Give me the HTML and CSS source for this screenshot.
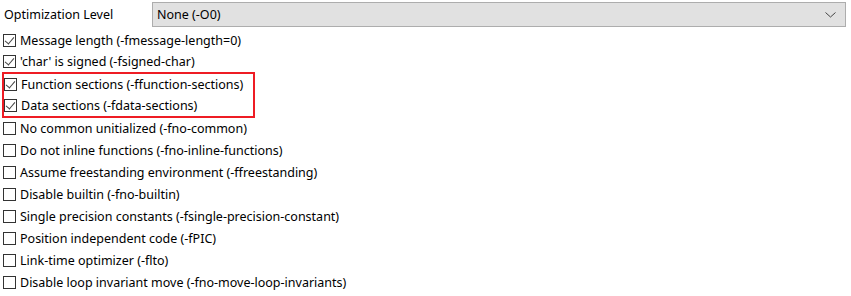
FILE: index.html
```html
<!DOCTYPE html>
<html lang="en">
<head>
    <meta charset="UTF-8">
    <title>Optimization</title>
    <link rel="stylesheet" href="styles.css">
</head>
<body>
    <div class="panel">
        <!-- Уровень оптимизации -->
        <div class="level-row">
            <label class="level-label">Optimization Level</label>
            <div class="combo">
                <span class="combo-text">None (-O0)</span>
                <svg class="combo-arrow" width="11" height="6" viewBox="0 0 11 6">
                    <path d="M0.5 0.5 L5.5 5 L10.5 0.5" fill="none" stroke="#444" stroke-width="1"/>
                </svg>
            </div>
        </div>

        <div class="options">
            <label class="opt short"><span class="box checked"></span>Message length (-fmessage-length=0)</label>
            <label class="opt short"><span class="box checked"></span>'char' is signed (-fsigned-char)</label>

            <div class="marked">
                <label class="opt short"><span class="box checked"></span>Function sections (-ffunction-sections)</label>
                <label class="opt short"><span class="box checked"></span>Data sections (-fdata-sections)</label>
            </div>

            <label class="opt"><span class="box"></span>No common unitialized (-fno-common)</label>
            <label class="opt"><span class="box"></span>Do not inline functions (-fno-inline-functions)</label>
            <label class="opt"><span class="box"></span>Assume freestanding environment (-ffreestanding)</label>
            <label class="opt"><span class="box"></span>Disable builtin (-fno-builtin)</label>
            <label class="opt"><span class="box"></span>Single precision constants (-fsingle-precision-constant)</label>
            <label class="opt"><span class="box"></span>Position independent code (-fPIC)</label>
            <label class="opt"><span class="box"></span>Link-time optimizer (-flto)</label>
            <label class="opt"><span class="box"></span>Disable loop invariant move (-fno-move-loop-invariants)</label>
        </div>
    </div>
</body>
</html>
```

FILE: styles.css
```css
* {
    margin: 0;
    padding: 0;
    box-sizing: border-box;
}

body {
    background: #ffffff;
    color: #000000;
    font-family: "Noto Sans", "Open Sans", sans-serif;
    font-size: 12.5px;
}

.panel {
    width: 851px;
    padding: 2px 5px 0 3px;
}

/* Строка с выпадающим списком */
.level-row {
    display: flex;
    align-items: center;
    height: 25px;
}

.level-label {
    width: 149px;
    padding-left: 1px;
}

.combo {
    flex: 1;
    height: 25px;
    display: flex;
    align-items: center;
    justify-content: space-between;
    background: #e1e1e1;
    border: 1px solid #adadad;
    padding: 0 9px 0 4px;
}

/* Список флажков */
.options {
    display: flex;
    flex-direction: column;
    padding-top: 3px;
}

.opt {
    display: flex;
    align-items: center;
    height: 22px;
    white-space: nowrap;
}

.opt.short {
    height: 21px;
}

.box {
    width: 13px;
    height: 13px;
    border: 1px solid #333333;
    background: #ffffff;
    margin-right: 4px;
    position: relative;
    flex-shrink: 0;
}

.box.checked::after {
    content: '';
    position: absolute;
    left: 3px;
    top: 0px;
    width: 4px;
    height: 8px;
    border-right: 1px solid #444444;
    border-bottom: 1px solid #444444;
    transform: rotate(40deg);
}

.marked {
    margin-left: -1px;
    margin-bottom: -1px;
    width: 253px;
    border: 2px solid #ee1c24;
}
```
